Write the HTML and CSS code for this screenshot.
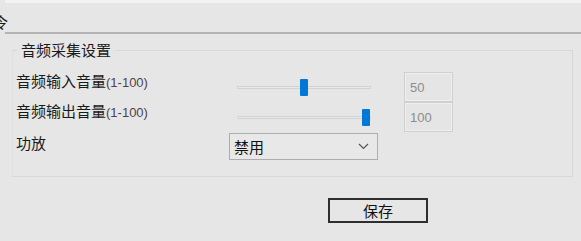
FILE: index.html
```html
<!DOCTYPE html>
<html lang="zh-CN">
<head>
    <meta charset="UTF-8">
    <title>音频采集设置</title>
    <link rel="stylesheet" href="styles.css">
</head>
<body>
    <div class="topbar"><span class="cut">令</span></div>
    <fieldset class="group">
        <legend>音频采集设置</legend>
        <div class="rows">
            <label class="label">音频输入音量<span class="range">(1-100)</span></label>
            <input class="slider" type="range" min="0" max="100" value="50">
            <input class="value" type="text" value="50" readonly>

            <label class="label">音频输出音量<span class="range">(1-100)</span></label>
            <input class="slider" type="range" min="0" max="100" value="100">
            <input class="value" type="text" value="100" readonly>

            <label class="label label-amp">功放</label>
            <div class="select">
                <span>禁用</span>
                <svg width="11" height="7" viewBox="0 0 11 7"><path d="M1 1 L5.5 5.5 L10 1" fill="none" stroke="#555" stroke-width="1.2"/></svg>
            </div>
        </div>
    </fieldset>
    <div class="actions">
        <button class="save">保存</button>
    </div>
</body>
</html>
```

FILE: styles.css
```css
body {
    margin: 0;
    background: #e7e6e6;
    font-family: "Noto Sans CJK SC", "Liberation Sans", sans-serif;
    font-size: 15px;
    color: #1a1a1a;
    overflow: hidden;
}
.topbar {
    height: 34px;
    margin-left: 5px;
    border-top: 3px solid #f2f2f2;
    border-bottom: 2px solid #b4b4b4;
    box-sizing: border-box;
    position: relative;
}
.cut {
    position: absolute;
    left: -12px;
    top: 8px;
    font-size: 15px;
}
.group {
    margin: 6px 8px 0 12px;
    padding: 0 0 14px 0;
    border: 1px solid #d9d8d8;
    border-left-color: #e0dfdf;
    height: 137px;
    box-sizing: border-box;
}
.group legend {
    margin-left: 4px;
    padding: 0 4px;
    font-size: 15px;
    line-height: 20px;
}
.rows {
    display: grid;
    grid-template-columns: 221px 134px 33px 49px;
    grid-template-rows: 30px 30px 28px;
    margin: 12px 0 0 3px;
    align-items: center;
}
.label {
    font-size: 15px;
    line-height: 20px;
    margin-top: -10px;
}
.label-amp {
    margin-top: -6px;
}
.range {
    font-family: "Liberation Sans", Arial, sans-serif;
    font-size: 13px;
    color: #4e4350;
}
.slider {
    -webkit-appearance: none;
    appearance: none;
    width: 134px;
    height: 17px;
    margin: 0;
    background: transparent;
    grid-column: 2;
}
.slider::-webkit-slider-runnable-track {
    height: 3px;
    background: #e9e9e9;
    border: 1px solid #d2d2d2;
    border-radius: 1px;
}
.slider::-webkit-slider-thumb {
    -webkit-appearance: none;
    width: 8px;
    height: 17px;
    margin-top: -8px;
    background: #0078d7;
    border-radius: 1px;
}
.value {
    grid-column: 4;
    width: 49px;
    height: 30px;
    box-sizing: border-box;
    margin: 0;
    padding: 0 0 0 5px;
    border: 1px solid #d0d0d0;
    box-shadow: inset 0 0 0 1px #efefef;
    background: #e6e5e5;
    color: #8c8c8c;
    font-family: "Liberation Sans", Arial, sans-serif;
    font-size: 13px;
    outline: none;
}
.select {
    grid-column: 2 / span 3;
    margin-left: -8px;
    width: 149px;
    height: 27px;
    box-sizing: border-box;
    border: 1px solid #adadad;
    background: #e8e8e8;
    display: flex;
    align-items: center;
    justify-content: space-between;
    padding: 0 8px 0 4px;
    font-size: 15px;
    color: #111;
}
.actions {
    display: flex;
    padding-left: 328px;
    margin-top: 21px;
}
.save {
    width: 100px;
    height: 25px;
    border: 2px solid #2e2e2e;
    background: #e7e6e6;
    font-family: "Noto Sans CJK SC", sans-serif;
    font-size: 15px;
    color: #111;
    padding: 0;
    line-height: 19px;
}
```
